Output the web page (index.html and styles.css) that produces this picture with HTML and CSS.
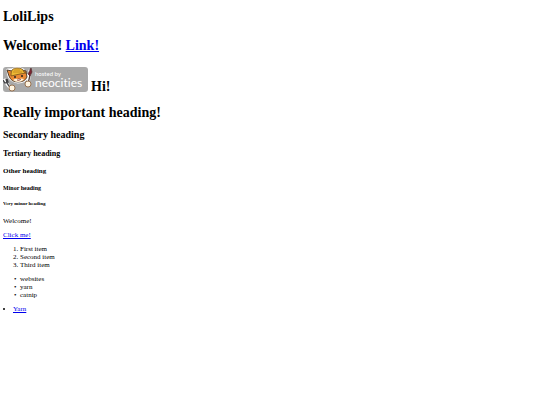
FILE: index.html
```
<!DOCTYPE html>
<html lang="en">
<head>
    <meta charset="UTF-8">
    <meta name="viewport" content="width=device-width, initial-scale=1.0">
    <title>LoliLips</title>
    <link rel="stylesheet" href="styles.css">
</head>
<body>

    <h1>LoliLips</h1>
    <h1>Welcome! <a href="#">Link!</a></h1>

    <h1 class="hosted">
        <a href="#" class="badge" aria-label="Hosted by Neocities">
            <svg class="cat" viewBox="0 0 30 25" aria-hidden="true">
                <!-- white edge behind the tools and head -->
                <path d="M1 12L4 17L8 22M27 3L25 17M6 9L5 3L9 3Q14 0 20 3L24 9Q22 15 15 15Q8 14 6 9" fill="#fff" stroke="#fff" stroke-width="3" stroke-linejoin="round"/>
                <!-- fork -->
                <path d="M0 13L2 16L5 15L4 12M3 12L4 16L8 22" fill="none" stroke="#3f3f42" stroke-width="1.3"/>
                <!-- brush -->
                <path d="M27 8L25 17" stroke="#54423c" stroke-width="1.3"/>
                <path d="M28 1L29 5L27 9L25 7Z" fill="#7b2430" stroke="#422" stroke-width=".6"/>
                <!-- head -->
                <path d="M6 9L4 3L9 4L19 3L23 4L24 10Q22 15 15 15Q8 15 6 9Z" fill="#ea8a35" stroke="#432" stroke-width=".9"/>
                <path d="M10 13Q13 11 15 12Q18 11 21 12Q19 15 15 15Q12 15 10 13Z" fill="#fff0d6"/>
                <!-- helmet -->
                <path d="M8 7Q8 1 14 1Q20 1 21 5L23 6L17 7L8 9Z" fill="#eeb934" stroke="#765019" stroke-width=".8"/>
                <path d="M11 3L17 3M10 5L19 5" stroke="#b57d20" stroke-width=".7"/>
                <!-- face -->
                <circle cx="12" cy="10" r="1" fill="#222"/>
                <circle cx="19" cy="9" r="1" fill="#222"/>
                <path d="M15 11L17 11L16 12Z" fill="#a43a35"/>
                <path d="M14 13Q16 14 18 12" fill="none" stroke="#722" stroke-width=".8"/>
                <!-- paws -->
                <circle cx="9" cy="21" r="3" fill="#fff4e0" stroke="#875b35" stroke-width=".8"/>
                <circle cx="25" cy="17" r="3" fill="#fff4e0" stroke="#875b35" stroke-width=".8"/>
            </svg>
            <span class="badge-text">
                <span class="badge-small">hosted by</span>
                <span class="badge-name">neocities</span>
            </span>
        </a>
        Hi!
    </h1>

    <h1 class="important">Really important heading!</h1>
    <h2>Secondary heading</h2>
    <h3>Tertiary heading</h3>
    <h4>Other heading</h4>
    <h5>Minor heading</h5>
    <h6>Very minor heading</h6>

    <p>Welcome!</p>
    <p><a href="#">Click me!</a></p>

    <ol>
        <li>First item</li>
        <li>Second item</li>
        <li>Third item</li>
    </ol>

    <ul>
        <li>websites</li>
        <li>yarn</li>
        <li>catnip</li>
    </ul>

    <ul class="loose">
        <li><a href="#">Yarn</a></li>
    </ul>

</body>
</html>
```
FILE: styles.css
```
body {
    font-family: "Liberation Serif", "Times New Roman", serif;
    font-size: 7px;
    line-height: 8px;
    color: #000;
    background-color: #fff;
    margin: 9px 3px;
}

a {
    color: #0000ee;
}

h1 {
    font-size: 14px;
    line-height: 16px;
    margin: 0 0 13px;
}

.important {
    margin-bottom: 8px;
}

h2 {
    font-size: 10px;
    line-height: 12px;
    margin: 0 0 8px;
}

h3 {
    font-size: 8px;
    line-height: 10px;
    margin: 0 0 8px;
}

h4 {
    font-size: 7px;
    line-height: 8px;
    margin: 0 0 9px;
}

h5 {
    font-size: 6px;
    line-height: 8px;
    margin: 0 0 9px;
}

h6 {
    font-size: 5px;
    line-height: 6px;
    margin: 0 0 10px;
}

p {
    margin: 0 0 6px;
}

ol, ul {
    margin: 0 0 6px;
    padding-left: 17px;
}

ul {
    list-style-type: "•  ";
}

.loose {
    list-style-type: disc;
    list-style-position: inside;
    padding-left: 0;
}

.hosted {
    display: flex;
    align-items: flex-end;
    gap: 3px;
    line-height: 10px;
}

.badge {
    display: flex;
    width: 85px;
    height: 25px;
    border-radius: 3px;
    background-color: #a9a9a9;
    color: #fff;
    font-family: Lato, sans-serif;
    font-weight: normal;
    font-variant-ligatures: none;
    text-decoration: none;
}

.cat {
    width: 30px;
    height: 25px;
}

.badge-text {
    display: flex;
    flex-direction: column;
    padding: 3px 0 0 2px;
}

.badge-small {
    font-size: 6px;
    line-height: 7px;
}

.badge-name {
    font-size: 12px;
    line-height: 12px;
}
```
